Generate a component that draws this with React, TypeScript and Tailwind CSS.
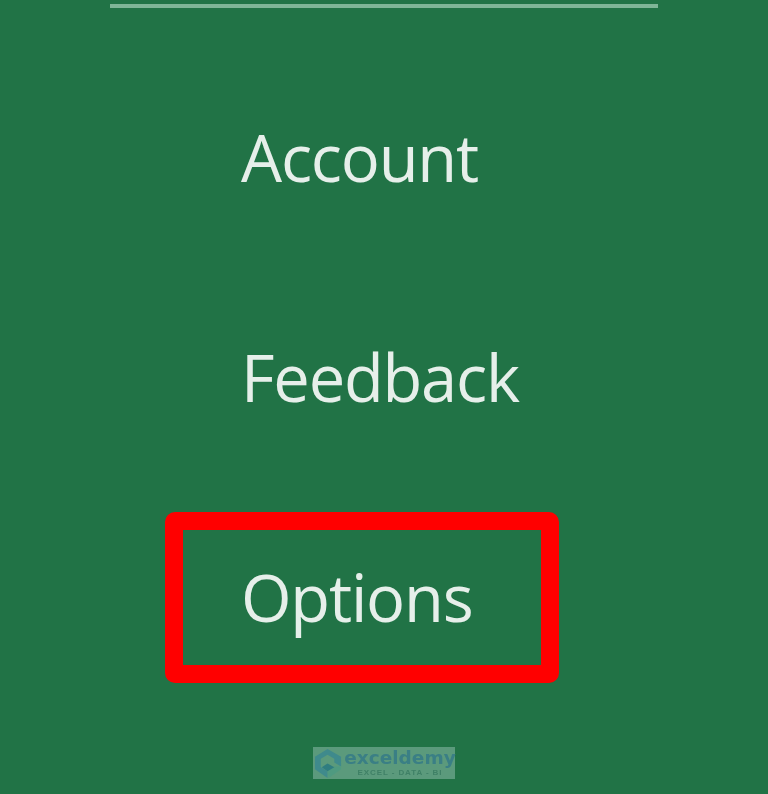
const font = "font-['Open_Sans','Noto_Sans',sans-serif]";

/* ── Exceldemy watermark ── */
function Watermark() {
  return (
    <div className="flex h-[32px] w-[142px] items-center bg-[#5b9a7c] pl-[1px] blur-[0.5px]">
      <svg viewBox="0 0 30 32" className="h-[31px] w-[29px] shrink-0">
        <path d="M14 1 L28 9 L28 19 L21 15 L21 11 L14 7 L7 11 L7 20 L14 24 L14 31 L1 22 L1 9 Z" fill="#3f8a8c" />
        <path d="M14 24 L21 19 L28 19 L28 22 L15 31 Z" fill="#4f9a80" />
        <path d="M8 20 L14 16 L21 20 L14 24 Z" fill="#2f7d80" />
      </svg>
      <div className="ml-[2px] flex w-[110px] flex-col items-center">
        <span className="font-['DejaVu_Sans',sans-serif] text-[18.5px] leading-[20px] font-bold text-[#3a7f85]">exceldemy</span>
        <span className="font-['Liberation_Sans',sans-serif] text-[8px] leading-[10px] font-bold tracking-[0.9px] text-[#3f8066]">EXCEL - DATA - BI</span>
      </div>
    </div>
  );
}

function MenuItem({ label, boxed = false }: { label: string; boxed?: boolean }) {
  return (
    <div
      className={`flex items-center ${
        boxed
          ? "ml-[165px] h-[171px] w-[394px] rounded-[10px] border-[18px] border-[#ff0000] pl-[59px]"
          : "ml-[242px] h-[220px]"
      }`}
    >
      <span className={`${font} -ml-[1px] text-[65px] leading-none font-[370] tracking-[-1.2px] text-[#e6efea] blur-[0.6px]`}>
        {label}
      </span>
    </div>
  );
}

export default function App() {
  return (
    <div className="flex h-[794px] w-[768px] flex-col overflow-hidden bg-[#217346]">
      <div className="mt-[4px] ml-[110px] h-[4px] w-[548px] bg-[#7fb597] blur-[0.5px]" />
      <div className="mt-[39px]">
        <MenuItem label="Account" />
      </div>
      <MenuItem label="Feedback" />
      <div className="mt-[25px]">
        <MenuItem label="Options" boxed />
      </div>
      <div className="mt-[64px] ml-[313px]">
        <Watermark />
      </div>
    </div>
  );
}
